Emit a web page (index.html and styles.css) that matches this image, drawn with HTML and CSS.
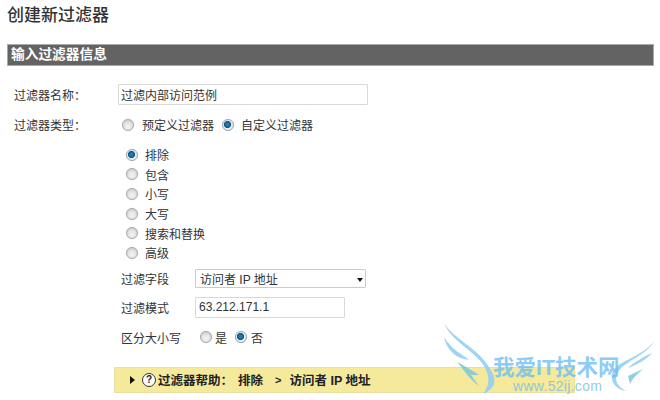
FILE: index.html
```html
<!DOCTYPE html>
<html lang="zh-CN">
<head>
<meta charset="utf-8">
<title>创建新过滤器</title>
<link rel="stylesheet" href="styles.css">
</head>
<body>
<main class="page">
  <h1 class="title">创建新过滤器</h1>
  <h2 class="bar">输入过滤器信息</h2>

  <div class="row row-name">
    <span class="label">过滤器名称：</span>
    <div class="field name-field">过滤内部访问范例</div>
  </div>
  <div class="row row-type">
    <span class="label">过滤器类型：</span>
    <span class="radio radio-first"></span><span class="opt opt-a">预定义过滤器</span>
    <span class="radio on"></span><span class="opt opt-b">自定义过滤器</span>
  </div>

  <ul class="choices">
    <li><span class="radio on"></span>排除</li>
    <li><span class="radio"></span>包含</li>
    <li><span class="radio"></span>小写</li>
    <li><span class="radio"></span>大写</li>
    <li><span class="radio"></span>搜索和替换</li>
    <li><span class="radio"></span>高级</li>
  </ul>

  <div class="sub">
    <div class="subrow">
      <span class="sublabel">过滤字段</span>
      <div class="field select-field">访问者 IP 地址<span class="caret"></span></div>
    </div>
    <div class="subrow subrow-mode">
      <span class="sublabel">过滤模式</span>
      <div class="field mode-field">63.212.171.1</div>
    </div>
    <div class="subrow subrow-case">
      <span class="sublabel case-label">区分大小写</span>
      <span class="radio"></span><span class="opt opt-yes">是</span>
      <span class="radio on"></span><span class="opt opt-no">否</span>
    </div>
  </div>

  <div class="help">
    <span class="tri"></span>
    <span class="qmark">?</span>
    <span class="help-text">过滤器帮助：</span>
    <span class="help-text help-item">排除</span>
    <span class="help-text help-sep">&gt;</span>
    <span class="help-text help-path">访问者 IP 地址</span>
  </div>
</main>

<div class="mark">
  <svg class="wings" width="240" height="110" viewBox="0 0 240 110">
    <g fill="#8fcdf5">
      <path d="M24 33 C34 50 60 58 72 82 C78 94 72 100 63 104 C69 96 71 88 64 76 C54 60 32 52 24 33Z"/>
      <path d="M24 47 C32 60 42 64 49 70 C38 69 27 62 24 47Z"/>
      <path d="M37 72 C45 76 52 80 59 85 L51 85 L59 96 C50 90 44 80 37 72Z" fill="#79c9dc"/>
      <path d="M234 51 C226 66 206 70 198 82 C193 90 198 97 206 101 C197 100 190 92 192 84 C196 70 222 68 234 51Z"/>
      <path d="M232 63 C226 70 218 74 208 78 C214 72 222 68 232 63Z"/>
      <path d="M223 79 C218 84 214 86 210 94 L208 86 Z" fill="#79c9dc"/>
    </g>
  </svg>
  <span class="mark-cn">我爱IT技术网</span>
  <span class="mark-url">www.52ij.com</span>
</div>
</body>
</html>
```

FILE: styles.css
```css
* { box-sizing: border-box; }
html, body { margin: 0; padding: 0; }
body {
  width: 660px;
  height: 400px;
  overflow: hidden;
  position: relative;
  background: #fff;
  color: #333;
  font-family: "Liberation Sans", "Noto Sans CJK SC", sans-serif;
  font-size: 12px;
}
.page { padding: 7px 6px 0 7px; }
.title {
  margin: 0;
  height: 18px;
  font-size: 17px;
  line-height: 18px;
  font-weight: 500;
  color: #333;
}
.bar {
  margin: 19px 0 0;
  height: 22px;
  padding-left: 3px;
  background: #636363;
  border: 1px solid #aaa;
  color: #fff;
  font-size: 13.7px;
  line-height: 19px;
  font-weight: 700;
}
.row { display: flex; align-items: center; height: 21px; }
.row-name { margin-top: 18px; }
.row-type { margin-top: 9px; }
.label {
  width: 111px;
  padding-left: 7px;
  flex: none;
}
.field {
  border: 1px solid #d8d8d8;
  border-radius: 1px;
  background: #fff;
  padding-left: 3px;
  display: flex;
  align-items: center;
}
.name-field { width: 250px; height: 21px; padding-left: 2px; }
.radio {
  display: inline-block;
  flex: none;
  width: 12px;
  height: 12px;
  border-radius: 50%;
  border: 1px solid #a9a9a9;
  box-shadow: 0 0 1px #ccc;
  background: radial-gradient(circle at 50% 65%, #f4f4f4 0, #e2e2e2 50%, #bdbdbd 100%);
}
.radio.on {
  border-color: #98a6b2;
  background: radial-gradient(circle at 45% 45%, #2f87b8 0, #0e5a8a 42%, #e9eef2 50%, #dfe5ea 100%);
}
.radio-first { margin-left: 4px; }
.opt { margin-left: 8px; }
.opt-a { margin-right: 8px; }
.opt-b { margin-left: 7px; }
.choices {
  list-style: none;
  margin: 10px 0 0;
  padding: 0 0 0 119px;
}
.choices li {
  display: flex;
  align-items: center;
  gap: 7px;
  height: 19.6px;
}
.sub { padding-left: 114px; margin-top: 5px; }
.subrow { display: flex; align-items: center; height: 21px; }
.subrow-mode { margin-top: 8px; }
.subrow-case { margin-top: 9px; }
.sublabel { width: 74px; flex: none; }
.case-label { width: 79px; }
.select-field {
  width: 171px;
  height: 19px;
  position: relative;
  border-color: #ccc;
  padding-left: 4px;
}
.caret {
  position: absolute;
  right: 2px;
  top: 8px;
  border: 3.5px solid transparent;
  border-top: 4px solid #111;
  border-bottom: 0;
}
.mode-field {
  width: 150px;
  height: 21px;
}
.opt.opt-yes { margin: 0 8px 0 3px; }
.opt.opt-no { margin-left: 4px; }
.help {
  margin: 19px 0 0 107px;
  width: 461px;
  height: 26px;
  display: flex;
  align-items: center;
  background: #f5e99b;
  border: 1px solid #e9dfa0;
  padding-left: 15px;
  color: #222;
}
.tri {
  border: 4px solid transparent;
  border-left: 5px solid #111;
  border-right: 0;
}
.qmark {
  margin-left: 7px;
  width: 14px;
  height: 14px;
  border: 1.5px solid #333;
  border-radius: 50%;
  background: #fff;
  font-size: 10px;
  font-weight: 700;
  line-height: 11px;
  text-align: center;
}
.help-text { font-weight: 700; font-size: 12.5px; white-space: pre; }
.qmark + .help-text { margin-left: 2px; }
.help-item { margin-left: 5px; }
.help-sep { margin-left: 12px; font-size: 11px; }
.help-path { margin-left: 8px; }
.mark {
  position: absolute;
  left: 420px;
  top: 290px;
  width: 240px;
  height: 110px;
  pointer-events: none;
}
.wings { display: block; opacity: .85; }
.mark-cn {
  position: absolute;
  left: 73px;
  top: 67px;
  font-size: 21.5px;
  line-height: 22px;
  font-weight: 700;
  color: rgba(110, 190, 245, .8);
  white-space: nowrap;
}
.mark-url {
  position: absolute;
  left: 93px;
  top: 90px;
  font-size: 14px;
  line-height: 12px;
  letter-spacing: .3px;
  color: rgba(120, 190, 220, .8);
}
```
